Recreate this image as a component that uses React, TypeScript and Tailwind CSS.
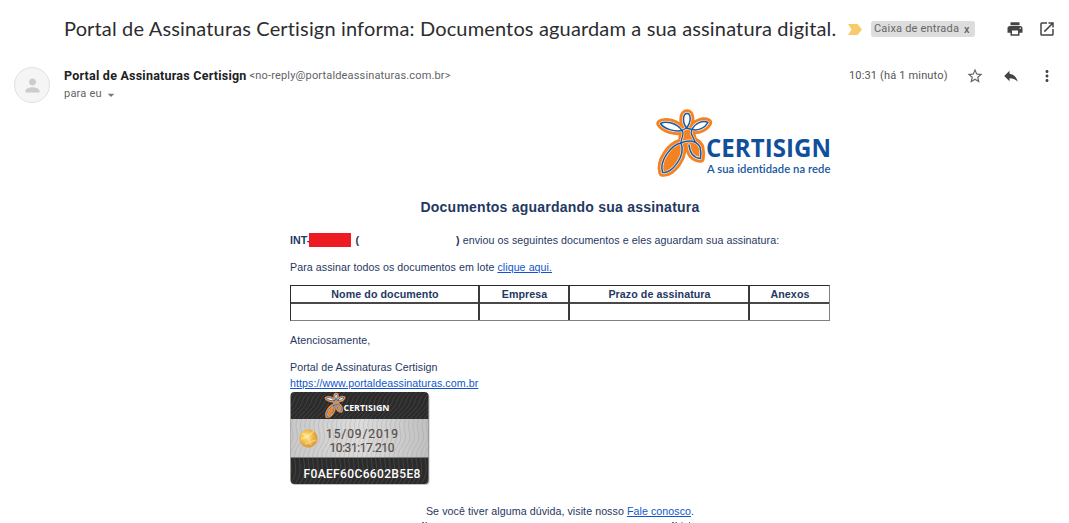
import React from "react";
import { MdPrint, MdOpenInNew, MdStarBorder, MdReply, MdMoreVert, MdPerson, MdArrowDropDown } from "react-icons/md";

const arms = [
  "M30.500 18C26 12 27 3.500 31 3.500C35 3.500 35.500 12 30.500 18Z",
  "M26 20.500C19 22 8 19 4.500 13.500C10 10.500 21 13 26 20.500Z",
  "M36 19.500C39 13 47 10 52 12.500C49 18 42 21 36 19.500Z",
];
const legs = [
  "M25 33C15 35 3 51 6.500 62.500C16 64 30 46 25 33Z",
  "M25 33C33 29 41 31 44 37C45 41 45 46 44.500 48.500C38 48 34 44 33 35",
];
const torso = "M26 20.500C29 24 25 28 25 33M36 19.500C33 24 38 27 39 32M26 20.500L30.500 18L36 19.500";

function Figure({ thin = false }) {
  const all = [...arms, ...legs];
  return (
    <g strokeLinejoin="round" strokeLinecap="round">
      {all.map((d) => <path key={d} d={d} fill="#f58220" stroke="#f58220" strokeWidth="8.500" />)}
      <path d="M25 19L36 19L40 33L24 34Z" fill="#f58220" stroke="#f58220" strokeWidth="4" />
      {all.map((d) => <path key={d} d={d} fill="none" stroke="#ffeede" strokeWidth="2.800" />)}
      {arms.map((d) => <path key={d} d={d} fill="#fff" />)}
      <path d={torso} fill="none" stroke="#ffe3c8" strokeWidth="2.600" />
      {all.map((d) => <path key={d} d={d} fill="none" stroke="#1a5aa5" strokeWidth={thin ? 2.4 : 1.5} />)}
      <path d={torso} fill="none" stroke="#1a5aa5" strokeWidth="1.300" />
    </g>
  );
}

function Logo() {
  return (
    <svg width="176" height="68" viewBox="0 0 176 68" className="block overflow-visible">
      <Figure />
      <text x="50" y="47" textLength="125" lengthAdjust="spacingAndGlyphs" fontFamily="Open Sans, sans-serif" fontWeight="700" fontSize="25.500" fill="#0f4f9c">CERTISIGN</text>
      <text x="51" y="63" textLength="123.500" lengthAdjust="spacingAndGlyphs" fontFamily="Lato, sans-serif" fontWeight="600" fontSize="11" fill="#1656a0" className="[font-variant-ligatures:none]">A sua identidade na rede</text>
    </svg>
  );
}

const waves = Array.from({ length: 44 }, (_, i) => i * 4.5 - 40);

function Stamp() {
  return (
    <svg width="140" height="94" viewBox="0 0 140 94" className="mt-px block">
      <defs>
        <clipPath id="card"><rect x="0.500" y="0" width="138" height="92" rx="4" /></clipPath>
        <linearGradient id="silver" x1="0" x2="1"><stop offset="0" stopColor="#c9c9c9" /><stop offset=".5" stopColor="#dcdcdc" /><stop offset="1" stopColor="#c0c0c0" /></linearGradient>
        <radialGradient id="gold" cx=".4" cy=".4"><stop offset="0" stopColor="#ffe9a0" /><stop offset=".6" stopColor="#f3c04c" /><stop offset="1" stopColor="#dfa041" /></radialGradient>
      </defs>
      <rect x="1.500" y="1" width="138" height="92" rx="4" fill="#c4c4c4" />
      <g clipPath="url(#card)">
        <rect width="140" height="94" fill="#2b2b2b" />
        <rect y="27" width="140" height="38.500" fill="url(#silver)" />
        <g fill="none" stroke="#888" strokeWidth="0.900" opacity=".28">
          {waves.map((x) => <path key={x} d={`M${x} 92C${x + 12} 75 ${x - 2} 68 ${x + 8} 54S${x + 2} 35 ${x + 16} 22S${x + 22} 8 ${x + 32} 0`} />)}
        </g>
      </g>
      <g transform="translate(34.500 1) scale(.375)"><Figure thin /></g>
      <text x="53.500" y="19" textLength="46" lengthAdjust="spacingAndGlyphs" fontFamily="Open Sans, sans-serif" fontWeight="700" fontSize="9.500" fill="#fff">CERTISIGN</text>
      <circle cx="18.500" cy="46.500" r="9.200" fill="url(#gold)" />
      <path d="M11 47L18 44L24 39M18 44L21 53M12 41L18 44M15 52L26 48" stroke="#fff0b5" strokeWidth="1.500" fill="none" opacity=".5" />
      <g fontFamily="Roboto, sans-serif" fill="#5b4e49" stroke="#5b4e49" strokeWidth="0.200">
        <text x="36" y="46" textLength="72" lengthAdjust="spacing" fontSize="12">15/09/2019</text>
        <text x="39.500" y="60" textLength="65" lengthAdjust="spacing" fontSize="12">10:31:17.210</text>
      </g>
      <text x="13.500" y="86" textLength="117" lengthAdjust="spacing" fontFamily="Roboto, sans-serif" fontWeight="500" fontSize="12" fill="#fff">F0AEF60C6602B5E8</text>
    </svg>
  );
}

const columns = [
  { label: "Nome do documento", width: "w-[189px]" },
  { label: "Empresa", width: "w-[90px]" },
  { label: "Prazo de assinatura", width: "w-[180px]" },
  { label: "Anexos", width: "w-[79px]" },
];

function DocumentTable() {
  return (
    <div className="mt-2.5 flex h-9 border border-t-[#2b2b2b] border-r-[#808080] border-b-[#808080] border-l-[#2b2b2b]">
      {columns.map((c, i) => (
        <div key={c.label} className={`${c.width} shrink-0 ${i < 3 ? "border-r-2 border-[#3a3a3a]" : ""}`}>
          <div className="h-[18px] border-b-2 border-[#484848] pl-px text-center leading-[17px] font-bold tracking-[0.08px]">{c.label}</div>
        </div>
      ))}
    </div>
  );
}

const link = "text-[#1155cc] underline";

export default function App() {
  return (
    <main className="h-[523px] w-[1069px] overflow-hidden bg-white font-['Roboto',sans-serif]">
      <header className="flex h-[58px] items-center pl-16">
        <h1 className="-mt-[2px] w-[784px] font-['Lato',sans-serif] text-[20px] leading-6 tracking-[0.15px] whitespace-nowrap text-[#2c2d30]">Portal de Assinaturas Certisign informa: Documentos aguardam a sua assinatura digital.</h1>
        <svg width="14" height="11" viewBox="0 0 14 11"><path d="M0 0H9.500L14 5.500L9.500 11H0L3.500 5.500Z" fill="#f7cb69" /></svg>
        <div className="ml-[9px] flex h-4 w-[104px] items-center rounded-[3px] bg-[#ddd] pl-[3px] text-[11px] tracking-[0.2px] text-[#666]">
          <span className="w-[90px] whitespace-nowrap">Caixa de entrada</span><span className="pt-0.5 font-medium">x</span>
        </div>
        <MdPrint className="ml-[31px] size-[18px] text-[#444]" />
        <MdOpenInNew className="ml-3.5 size-[18px] text-[#444]" />
      </header>
      <section className="flex h-[52px] pl-3.5">
        <div className="mt-[9px] flex size-9 items-center justify-center rounded-full border border-[#e0e0e0] bg-[#f5f5f5]"><MdPerson className="size-[21px] text-[#ccc]" /></div>
        <div className="ml-3.5 w-[785px] pt-2.5 text-[11px] text-[#5f6368]">
          <p className="flex h-[17px] items-center whitespace-nowrap"><strong className="mr-[3px] text-[12.500px] font-bold tracking-[0.23px] text-[#202124]">Portal de Assinaturas Certisign</strong><span className="tracking-[0.16px]">&lt;no-reply@portaldeassinaturas.com.br&gt;</span></p>
          <p className="flex h-[18px] items-center tracking-[0.2px]">para eu<MdArrowDropDown className="mt-px ml-px size-4 text-[#777]" /></p>
        </div>
        <div className="flex h-9 items-center text-[#555]">
          <span className="w-[117px] pt-px text-[11px] tracking-[0.16px] whitespace-nowrap">10:31 (há 1 minuto)</span>
          <MdStarBorder className="size-[18px] text-[#666]" /><MdReply className="ml-[18px] size-[18px] text-[#444]" /><MdMoreVert className="ml-[18px] size-[18px] text-[#444]" />
        </div>
      </section>
      <article className="ml-[290px] w-[540px] font-['Liberation_Sans',sans-serif] text-[10.670px] leading-4 tracking-[0.06px] whitespace-nowrap text-[#1f3864]">
        <div className="flex h-[68px] justify-end"><div className="-mr-0.5"><Logo /></div></div>
        <h2 className="mt-[21px] text-center text-[14px] leading-4 font-bold tracking-[0.23px]">Documentos aguardando sua assinatura</h2>
        <p className="mt-[17px] flex h-4 items-center"><b className="w-[19px]">INT-</b><span className="h-3.5 w-[42px] bg-[#ed1c24]" /><b className="ml-[4.500px]">(</b><b className="mr-[3px] ml-[97px]">)</b>enviou os seguintes documentos e eles aguardam sua assinatura:</p>
        <p className="mt-[11px]">Para assinar todos os documentos em lote <a className={link}>clique aqui.</a></p>
        <DocumentTable />
        <p className="mt-[11px]">Atenciosamente,</p>
        <p className="mt-[11px]">Portal de Assinaturas Certisign</p>
        <p><a className={link}>https://www.portaldeassinaturas.com.br</a></p>
        <Stamp />
        <p className="mt-[17px] text-center">Se você tiver alguma dúvida, visite nosso <a className={link}>Fale conosco</a>.</p>
        <svg width="540" height="4" viewBox="0 0 540 4" className="mt-[3px] block" fill="none" stroke="#1f3864" strokeOpacity=".7">
          <path d="M132 .5h2M135.500 .5h1.500M382 .5h2M385.500 .5h1.500M391.500 .5h1M399 .5h1" />
        </svg>
      </article>
    </main>
  );
}
